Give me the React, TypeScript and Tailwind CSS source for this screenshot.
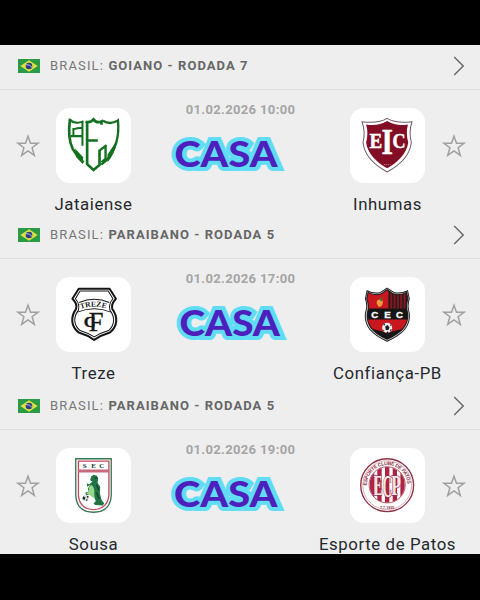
import type { ReactNode } from 'react';
import clsx from 'clsx';

type Match = {
  id: string;
  competition: string;
  date: string;
  home: string;
  away: string;
  homeCrest: ReactNode;
  awayCrest: ReactNode;
  tip: { x: number; width: number };
};

const BrazilFlag = () => (
  <svg className="h-3.5 w-[22px] shrink-0" viewBox="0 0 66 42">
    <rect width="66" height="42" fill="#2b9a45" />
    <path d="M33 4 59 21 33 38 7 21Z" fill="#dfdf45" />
    <circle cx="33" cy="21" r="10" fill="#2b3f80" />
    <path d="M24 17Q34 15 42 25" fill="none" stroke="#c9d6e0" strokeWidth="2.5" />
  </svg>
);

const ChevronIcon = () => (
  <svg className="h-5 w-3 shrink-0" viewBox="0 0 12 20" fill="none" stroke="#6a6a6a" strokeWidth="1.5">
    <path d="M1.2 1 10.2 10 1.2 19" />
  </svg>
);

const StarIcon = () => (
  <svg className="h-6 w-6" viewBox="0 0 24 24" fill="none" stroke="#a0a0a0" strokeWidth="1.5" strokeLinejoin="miter">
    <path d="M12 2.2 14.5 9.2H22.2L16.1 13.7 18.3 21.4 12 17 5.7 21.4 7.9 13.7 1.8 9.2H9.5Z" />
  </svg>
);

const JataienseCrest = () => (
  <svg className="h-full w-full" viewBox="168 39 224 224" fill="none" stroke="#12701f" strokeWidth="8">
    <path d="M210 71C205 105 206 137 218 161Q230 183 250 202" />
    <path d="M225 160 249 186V207L228 185Z" fill="#12701f" stroke="none" />
    <path d="M207 73Q227 90 250 78M247 78V152M222 102Q236 97 246 99M220 99V125M211 123H246" strokeWidth="6" />
    <path d="M261 78V207L280 224 298 209V164M256 80Q270 85 280 73 289 86 304 79V89M263 136H293" strokeWidth="8" />
    <path d="M308 77Q330 91 353 76C358 124 345 165 319 195L303 208M316 151V191L304 201M299 165 319 150" strokeWidth="7" />
    <path d="M348 138 322 178V201Q343 177 350 142Z" fill="#12701f" stroke="none" />
  </svg>
);

const InhumasCrest = () => (
  <svg className="h-full w-full" viewBox="89 39 224 224">
    <path
      d="M200 70Q226 86 274 80 264 111 272 142C268 181 235 211 200 230C165 211 132 181 128 142Q136 111 125 80 174 86 200 70Z"
      fill="#fff"
      stroke="#745963"
      strokeWidth="3"
    />
    <path d="M200 78Q227 94 262 88 255 114 263 142C258 176 231 202 200 219C169 202 142 176 137 142Q145 114 137 88 173 94 200 78Z" fill="#820d24" />
    <text fill="#fff" stroke="#fff" strokeWidth="1.5" fontFamily="Liberation Serif, serif" fontWeight="700">
      <tspan x="147" y="158" fontSize="60" textLength="38" lengthAdjust="spacingAndGlyphs">E</tspan>
      <tspan x="183" y="177" fontSize="108" textLength="34" lengthAdjust="spacingAndGlyphs">I</tspan>
      <tspan x="216" y="158" fontSize="60" textLength="39" lengthAdjust="spacingAndGlyphs">C</tspan>
    </text>
    <path d="M190 208H210" stroke="#d8a6b0" strokeWidth="2" strokeDasharray="4 2" />
  </svg>
);

const TrezeCrest = () => (
  <svg className="h-full w-full" viewBox="168 171 224 224" fill="none" stroke="#161616">
    <path d="M236 206H328L347 236Q332 252 336 266C354 290 352 319 329 337Q302 345 282 359 263 345 236 337C212 319 211 290 228 266Q233 252 217 236Z" strokeWidth="6" strokeLinejoin="round" />
    <path d="M240 213H324L338 236Q324 252 329 270C347 294 341 317 325 331Q301 338 282 350 263 338 240 331C223 317 217 294 235 270Q240 252 226 236Z" strokeWidth="3" />
    <path d="M237 247Q282 228 327 247M232 276Q282 255 332 276" strokeWidth="3" />
    <path id="treze-arc" d="M242 267Q282 252 324 267" stroke="none" />
    <g fill="#161616" stroke="none" fontFamily="Liberation Serif, serif">
      <text fontSize="23" fontWeight="700" textLength="77" lengthAdjust="spacingAndGlyphs">
        <textPath href="#treze-arc">TREZE</textPath>
      </text>
      <text stroke="#161616">
        <tspan x="251" y="321" fontSize="46" fontWeight="700" textLength="36" lengthAdjust="spacingAndGlyphs">C</tspan>
        <tspan x="266" y="331" fontSize="80" textLength="44" lengthAdjust="spacingAndGlyphs">F</tspan>
      </text>
    </g>
  </svg>
);

const ConfiancaCrest = () => (
  <svg className="h-full w-full" viewBox="89 37 224 224">
    <defs>
      <clipPath id="confianca-shield">
        <path d="M200 75 219 88Q239 93 258 83L262 102Q254 123 261 145C265 179 245 202 200 223C155 202 137 179 141 145Q148 123 139 102L143 83Q162 93 181 88Z" />
      </clipPath>
    </defs>
    <path
      d="M200 70 220 83Q239 89 261 78L266 102Q259 123 266 145C270 183 248 207 200 229C152 207 131 183 135 145Q143 123 135 102L140 78Q161 89 180 83Z"
      fill="#c7c7c7"
      stroke="#252525"
      strokeWidth="3"
    />
    <g clipPath="url(#confianca-shield)">
      <rect x="132" y="70" width="136" height="160" fill="#c9161f" />
      <path d="M202 70H268V133H202Z" fill="#7e1a20" />
      <path d="M207 70V132M217 70V132M227 70V132M237 70V132M247 70V132M257 70V132" stroke="#281719" strokeWidth="4" />
      <path d="M132 131H268V164H132ZM132 190Q168 192 200 205 234 192 268 190V232H132Z" fill="#161616" />
      <path d="M169 116Q167 106 176 104L187 108Q188 128 174 126Z" fill="#ee9b3d" />
      <path d="M178 106 181 97 187 100 183 110Z" fill="#486b32" />
    </g>
    <path d="M200 75 219 88Q239 93 258 83L262 102Q254 123 261 145C265 179 245 202 200 223C155 202 137 179 141 145Q148 123 139 102L143 83Q162 93 181 88Z" fill="none" stroke="#1c1c1c" strokeWidth="3" />
    <g fill="#fff" fontFamily="Liberation Sans, sans-serif" fontSize="29" fontWeight="700" textAnchor="middle" stroke="#fff" strokeWidth="1">
      <text x="163" y="158">C</text>
      <text x="201" y="158">E</text>
      <text x="237" y="158">C</text>
    </g>
    <circle cx="200" cy="189" r="15" fill="#eee" />
    <path d="M194 185 201 180 207 187 204 195 196 195ZM187 180 193 176 194 182ZM209 177 214 184 208 182ZM186 193 192 197 190 200ZM209 194 214 192 208 201ZM197 204 201 199 205 204Z" fill="#222" />
  </svg>
);

const SousaCrest = () => (
  <svg className="h-full w-full" viewBox="168 174 224 224">
    <path d="M227 206H333V315Q331 365 280 366 229 365 227 315Z" fill="#fff" stroke="#397653" strokeWidth="4" />
    <path d="M235 213H326V315Q322 356 280 358 238 356 235 315Z" fill="none" stroke="#c34a60" strokeWidth="4" />
    <path d="M234 243H327" stroke="#c76b7c" strokeWidth="9" />
    <g fill="#26372f" fontFamily="Liberation Serif, serif" fontSize="21" fontWeight="700" textAnchor="middle">
      <text x="254" y="234">S</text>
      <text x="280" y="234">E</text>
      <text x="305" y="234">C</text>
    </g>
    <path
      d="M273 259 280 254 290 257 294 266 292 278 300 290 299 309 304 329 312 339 308 346 285 344 280 339 287 333 282 321 270 313 258 314 255 308 266 304 263 296 270 284 261 290 260 279 267 282 277 275 270 270Z"
      fill="#1f7546"
    />
    <path d="M273 284Q285 293 282 310L284 326 269 315 258 310 267 303 266 293Z" fill="#9bd78b" />
    <path d="M283 264H293M289 283 296 300M289 306 297 326" stroke="#17422d" strokeWidth="4" />
    <circle cx="257" cy="324" r="9" fill="#ddd" />
    <path d="M249 318 256 322 253 329 247 326ZM259 316 266 319 263 325ZM257 328 263 328 260 333Z" fill="#1d2a25" />
  </svg>
);

const PatosCrest = () => (
  <svg className="h-full w-full" viewBox="119 39 224 224">
    <defs>
      <clipPath id="patos-disc">
        <circle cx="230" cy="149" r="53" />
      </clipPath>
    </defs>
    <circle cx="230" cy="150" r="79" fill="#fff" stroke="#8e3145" strokeWidth="4" />
    <circle cx="230" cy="150" r="73" fill="none" stroke="#b56b7a" strokeWidth="1.5" />
    <g clipPath="url(#patos-disc)">
      <rect x="176" y="96" width="108" height="108" fill="#fff" />
      <path d="M185 96V204M207 96V204M230 96V204M253 96V204M276 96V204" stroke="#ad2444" strokeWidth="13" />
    </g>
    <circle cx="230" cy="149" r="54" fill="none" stroke="#a63950" strokeWidth="2.5" />
    <path id="patos-arc" d="M169 151A61 61 0 0 1 291 151" fill="none" />
    <text fill="#8e3145" fontFamily="Liberation Sans, sans-serif" fontSize="15" fontWeight="700" textLength="187">
      <textPath href="#patos-arc">ESPORTE CLUBE DE PATOS</textPath>
    </text>
    <text fontFamily="Liberation Serif, serif" fontWeight="700" fill="#f6e9ec" stroke="#963148" strokeWidth="5" paintOrder="stroke">
      <tspan x="190" y="179" fontSize="88" textLength="26" lengthAdjust="spacingAndGlyphs">E</tspan>
      <tspan x="217" y="184" fontSize="96" textLength="27" lengthAdjust="spacingAndGlyphs">C</tspan>
      <tspan x="243" y="179" fontSize="88" textLength="28" lengthAdjust="spacingAndGlyphs">P</tspan>
    </text>
    <text x="230" y="220" fill="#8e3145" fontFamily="Liberation Sans, sans-serif" fontSize="11" fontWeight="700" textAnchor="middle" textLength="43">
      7.7.1935
    </text>
  </svg>
);

const matches: Match[] = [
  {
    id: 'jataiense-inhumas',
    competition: 'GOIANO - RODADA 7',
    date: '01.02.2026 10:00',
    home: 'Jataiense',
    away: 'Inhumas',
    homeCrest: <JataienseCrest />,
    awayCrest: <InhumasCrest />,
    tip: { x: 13.5, width: 103 }
  },
  {
    id: 'treze-confianca',
    competition: 'PARAIBANO - RODADA 5',
    date: '01.02.2026 17:00',
    home: 'Treze',
    away: 'Confiança-PB',
    homeCrest: <TrezeCrest />,
    awayCrest: <ConfiancaCrest />,
    tip: { x: 18.5, width: 100.5 }
  },
  {
    id: 'sousa-patos',
    competition: 'PARAIBANO - RODADA 5',
    date: '01.02.2026 19:00',
    home: 'Sousa',
    away: 'Esporte de Patos',
    homeCrest: <SousaCrest />,
    awayCrest: <PatosCrest />,
    tip: { x: 13, width: 103.5 }
  }
];

const Team = ({ name, crest }: { name: string; crest: ReactNode }) => (
  <div className="flex w-[75px] shrink-0 flex-col items-center">
    <div className="h-[75px] w-[75px] overflow-hidden rounded-[14px] bg-white">{crest}</div>
    <p className="mt-[9px] text-[16.8px] leading-6 tracking-[0.6px] whitespace-nowrap text-[#25292c]">{name}</p>
  </div>
);

const Tip = ({ x, width }: Match['tip']) => (
  <svg className="mt-3 h-11 w-40" viewBox="0 0 160 44">
    <text
      x={x}
      y="36.5"
      textLength={width}
      lengthAdjust="spacingAndGlyphs"
      fontFamily="Lato, sans-serif"
      fontSize="36"
      fontWeight="900"
      fill="#4d20bd"
      stroke="#60dcf4"
      strokeWidth="8"
      paintOrder="stroke"
    >
      CASA
    </text>
  </svg>
);

const MatchSection = ({ match, className }: { match: Match; className: string }) => (
  <section className={clsx('shrink-0', className)}>
    <header className="flex h-[45px] items-center border-b border-[#dedede] pr-[15px] pb-0.5 pl-[18px]">
      <BrazilFlag />
      <h2 className="ml-2.5 flex-1 text-[13px] tracking-[1.15px] whitespace-nowrap text-[#777]">
        BRASIL: <span className="font-bold tracking-[1.05px] text-[#666]">{match.competition}</span>
      </h2>
      <ChevronIcon />
    </header>

    <div className="flex items-start pt-[18px] pr-3.5 pl-4">
      <div className="flex h-[75px] w-10 shrink-0 items-center">
        <StarIcon />
      </div>
      <Team name={match.home} crest={match.homeCrest} />
      <div className="flex flex-1 flex-col items-center">
        <time className="mt-[-6px] text-[13px] leading-4 font-bold tracking-[0.35px] text-[#a5a5a5]">{match.date}</time>
        <Tip {...match.tip} />
      </div>
      <Team name={match.away} crest={match.awayCrest} />
      <div className="flex h-[75px] w-[41px] shrink-0 items-center justify-end">
        <StarIcon />
      </div>
    </div>
  </section>
);

const App = () => (
  <main className="h-[600px] w-[480px] overflow-hidden bg-black pt-[45px] font-['Roboto',sans-serif]">
    <div className="flex h-[509px] flex-col overflow-hidden bg-[#eeeeef]">
      {matches.map((match, index) => (
        <MatchSection key={match.id} match={match} className={index === 0 ? 'h-[169px]' : 'h-[171px]'} />
      ))}
    </div>
  </main>
);

export default App;
